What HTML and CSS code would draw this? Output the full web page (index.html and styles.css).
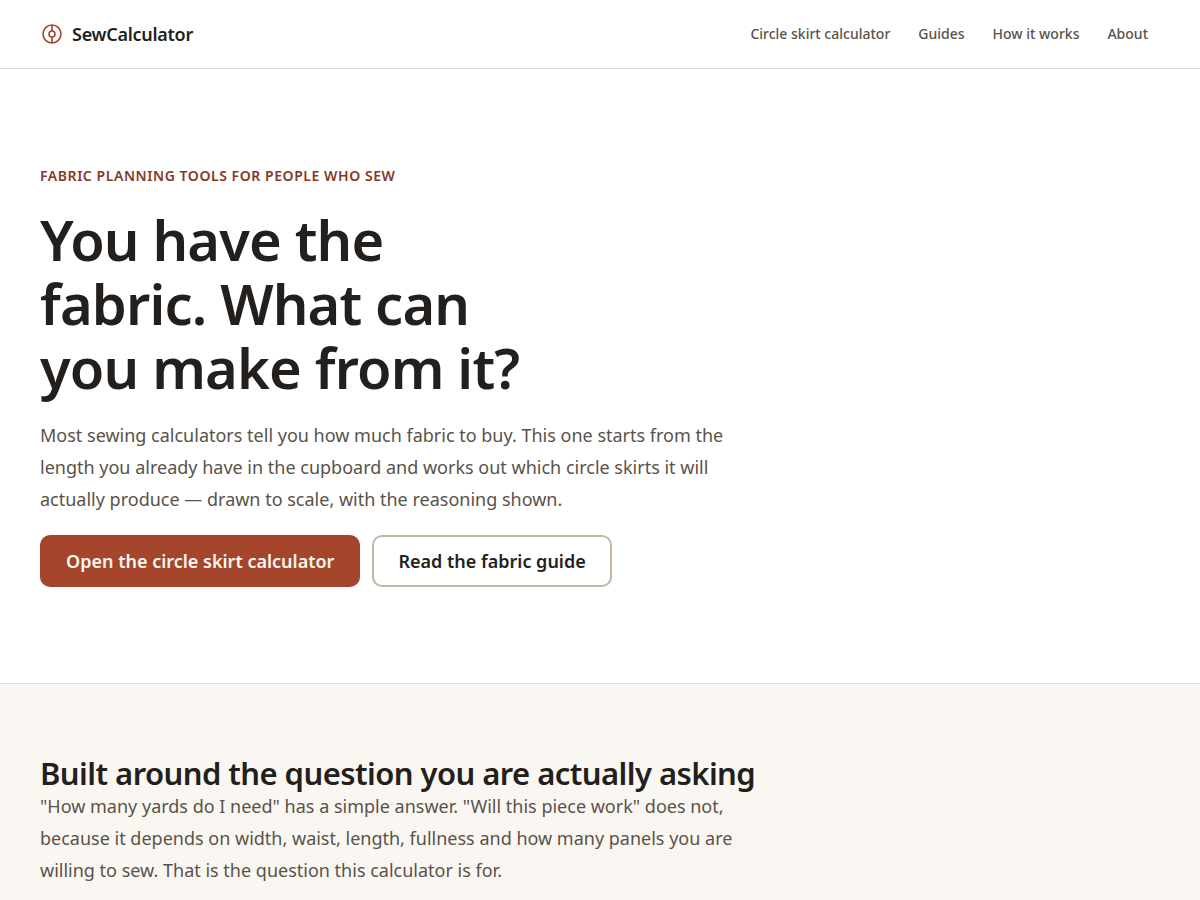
FILE: index.html
```html
<!DOCTYPE html>
<html lang="en">
<head>
    <meta charset="UTF-8">
    <meta name="viewport" content="width=device-width, initial-scale=1.0">
    <title>SewCalculator</title>
    <link rel="stylesheet" href="styles.css">
</head>
<body>
    <header class="site-header">
        <a class="brand" href="#">
            <svg class="brand-mark" viewBox="0 0 24 24" fill="none" stroke="currentColor" stroke-width="1.6" aria-hidden="true">
                <circle cx="12" cy="12" r="9"/>
                <circle cx="12" cy="12" r="3"/>
                <path d="M12 3v6M12 15v6"/>
            </svg>
            SewCalculator
        </a>
        <nav class="site-nav">
            <a href="#">Circle skirt calculator</a>
            <a href="#">Guides</a>
            <a href="#">How it works</a>
            <a href="#">About</a>
        </nav>
    </header>
    <main>
        <section class="hero">
            <p class="eyebrow">Fabric planning tools for people who sew</p>
            <h1>You have the fabric. What can you make from it?</h1>
            <p class="lead">Most sewing calculators tell you how much fabric to buy. This one starts from the length you already have in the cupboard and works out which circle skirts it will actually produce — drawn to scale, with the reasoning shown.</p>
            <div class="actions">
                <button class="btn btn-primary" type="button">Open the circle skirt calculator</button>
                <button class="btn btn-secondary" type="button">Read the fabric guide</button>
            </div>
        </section>
        <section class="about">
            <h2>Built around the question you are actually asking</h2>
            <p class="lead">"How many yards do I need" has a simple answer. "Will this piece work" does not, because it depends on width, waist, length, fullness and how many panels you are willing to sew. That is the question this calculator is for.</p>
        </section>
    </main>
</body>
</html>
```

FILE: styles.css
```css
* {
    box-sizing: border-box;
}
body {
    margin: 0;
    font-family: "Noto Sans", sans-serif;
    font-size: 18px;
    color: #231f1c;
    background: #fff;
}
h1, h2, p {
    margin: 0;
}
a {
    color: inherit;
    text-decoration: none;
}
.site-header {
    display: flex;
    justify-content: space-between;
    align-items: center;
    padding: 16px 40px;
    border-bottom: 1px solid #e0dbd0;
}
.brand {
    display: flex;
    align-items: center;
    gap: 8px;
    font-weight: 600;
    letter-spacing: -0.015em;
}
.brand-mark {
    width: 24px;
    height: 24px;
    color: #a4452c;
}
.site-nav {
    display: flex;
    gap: 4px;
}
.site-nav a {
    padding: 8px 12px;
    font-size: 14px;
    line-height: 20px;
    font-weight: 500;
    color: #5a524a;
}
.hero {
    padding: 96px 40px;
    border-bottom: 1px solid #e0dbd0;
}
.eyebrow {
    margin-bottom: 20px;
    font-size: 14px;
    line-height: 22px;
    font-weight: 600;
    letter-spacing: 0.04em;
    text-transform: uppercase;
    color: #87381f;
}
h1 {
    max-width: 500px;
    margin-bottom: 20px;
    font-size: 56px;
    line-height: 64px;
    font-weight: 600;
    letter-spacing: -0.015em;
}
.lead {
    max-width: 700px;
    line-height: 32px;
    color: #5a524a;
}
.actions {
    display: flex;
    flex-wrap: wrap;
    gap: 12px;
    margin-top: 20px;
}
.btn {
    height: 52px;
    padding: 0 24px;
    border: 2px solid #a4452c;
    border-radius: 10px;
    font: inherit;
    font-weight: 600;
    cursor: pointer;
}
.btn-primary {
    background: #a4452c;
    color: #fdf8f0;
}
.btn-secondary {
    border-color: #c4b5a5;
    background: #fff;
    color: #231f1c;
}
.about {
    padding: 72px 40px;
    background: #faf7f2;
}
h2 {
    font-size: 31px;
    line-height: 34px;
    font-weight: 600;
    letter-spacing: -0.018em;
}
```
